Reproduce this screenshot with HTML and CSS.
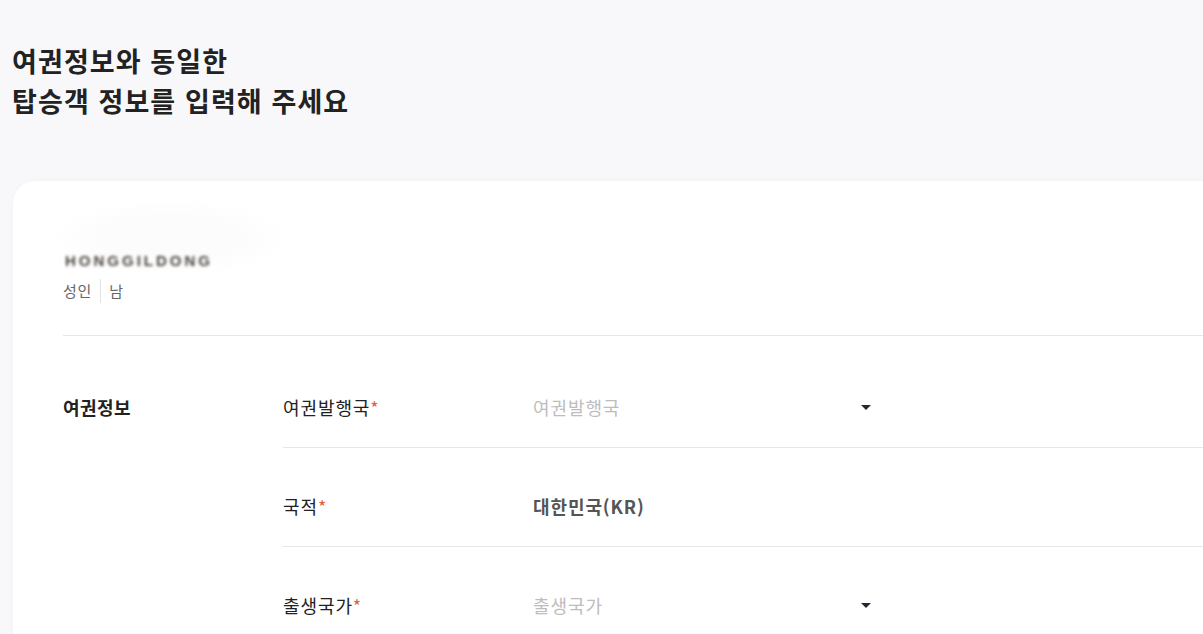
FILE: index.html
```html
<!DOCTYPE html>
<html lang="ko">
<head>
<meta charset="utf-8">
<link rel="stylesheet" href="styles.css">
</head>
<body>
<h1 class="title">여권정보와 동일한<br>탑승객 정보를 입력해 주세요</h1>
<div class="card">
  <div class="passenger">
    <div class="name-blob"><span class="name-text">HONGGILDONG</span></div>
    <div class="meta"><span>성인</span><span class="sep"></span><span>남</span></div>
  </div>
  <div class="section">
    <div class="section-title">여권정보</div>
    <div class="rows">
      <div class="row">
        <div class="label">여권발행국<span class="req">*</span></div>
        <div class="field select"><span class="placeholder">여권발행국</span><span class="caret"></span></div>
      </div>
      <div class="row">
        <div class="label">국적<span class="req">*</span></div>
        <div class="field"><span class="value">대한민국(KR)</span></div>
      </div>
      <div class="row">
        <div class="label">출생국가<span class="req">*</span></div>
        <div class="field select"><span class="placeholder">출생국가</span><span class="caret"></span></div>
      </div>
    </div>
  </div>
</div>
</body>
</html>
```
FILE: styles.css
```css
html, body {
  margin: 0;
  padding: 0;
}
body {
  background: #f8f8fa;
  font-family: "Noto Sans CJK KR", "Noto Sans", sans-serif;
  color: #222;
  overflow: hidden;
  height: 634px;
}
.title {
  margin: 0;
  padding: 41px 0 0 12px;
  font-size: 27px;
  line-height: 40px;
  font-weight: 700;
  color: #222;
  letter-spacing: 1.1px;
}
.card {
  margin: 60px 0 0 13px;
  width: 1400px;
  height: 600px;
  background: #fff;
  border-radius: 22px;
  box-shadow: 0 0 4px rgba(0,0,0,0.03);
  padding: 20px 0 0 50px;
  box-sizing: border-box;
}
.passenger {
  width: 1337px;
  border-bottom: 1px solid #e6e6e8;
  padding-bottom: 32px;
}
.name-blob {
  width: 230px;
  height: 74px;
  margin-left: -8px;
  border-radius: 40px;
  background: radial-gradient(ellipse at center, #fcfcfc 40%, #ffffff 75%);
  display: flex;
  align-items: flex-end;
  padding-left: 10px;
  box-sizing: border-box;
}
.name-text {
  font-family: "Liberation Sans", sans-serif;
  font-size: 15px;
  font-weight: 700;
  color: #4a443e;
  letter-spacing: 3px;
  filter: blur(1.4px);
  margin-bottom: 6px;
}
.meta {
  display: flex;
  align-items: center;
  font-size: 15px;
  line-height: 22px;
  color: #666;
  margin-top: 4px;
  letter-spacing: 0.8px;
}
.sep {
  width: 1px;
  height: 24px;
  background: #e2e2e2;
  margin: 0 8px 0 8px;
}
.section {
  display: flex;
  padding-top: 13px;
}
.section-title {
  width: 220px;
  flex: none;
  font-size: 18px;
  font-weight: 700;
  line-height: 22px;
  padding-top: 47px;
  letter-spacing: 0.4px;
}
.rows {
  flex: 1;
}
.row {
  display: flex;
  align-items: center;
  padding: 47px 0 29px;
  border-bottom: 1px solid #e6e6e8;
  line-height: 22px;
}
.label {
  width: 250px;
  flex: none;
  font-size: 18px;
  color: #222;
  letter-spacing: 0.9px;
}
.req {
  color: #e4603c;
  margin-left: 0;
}
.field {
  width: 338px;
  display: flex;
  align-items: center;
  justify-content: space-between;
  font-size: 18px;
  letter-spacing: 0.9px;
}
.placeholder {
  color: #bdbdbd;
}
.value {
  color: #555;
  font-weight: 700;
}
.caret {
  width: 0;
  height: 0;
  border-left: 5px solid transparent;
  border-right: 5px solid transparent;
  border-top: 5px solid #252833;
}
```
